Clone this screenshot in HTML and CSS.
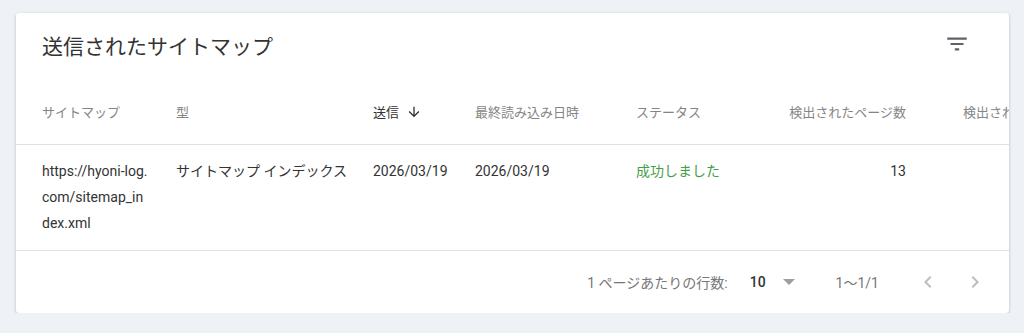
FILE: index.html
```html
<!DOCTYPE html>
<html lang="ja">
<head>
  <meta charset="UTF-8" />
  <title>送信されたサイトマップ</title>
  <link rel="stylesheet" href="styles.css">
</head>
<body>
  <div class="card">
    <div class="card-head">
      <h2>送信されたサイトマップ</h2>
      <span class="filter-btn">
        <svg width="26" height="26" viewBox="0 0 24 24"><path d="M10 18h4v-2h-4v2zM3 6v2h18V6H3zm3 7h12v-2H6v2z" fill="#5f6368"/></svg>
      </span>
    </div>

    <table class="sitemaps">
      <thead>
        <tr>
          <th class="c1">サイトマップ</th>
          <th class="c2">型</th>
          <th class="c3 sorted">送信 <svg class="sort" width="16" height="16" viewBox="0 0 24 24"><path d="M20 12l-1.41-1.41L13 16.17V4h-2v12.17l-5.58-5.59L4 12l8 8 8-8z" fill="#333"/></svg></th>
          <th class="c4">最終読み込み日時</th>
          <th class="c5">ステータス</th>
          <th class="c6 num">検出されたページ数</th>
          <th class="c7">検出された動画数</th>
        </tr>
      </thead>
      <tbody>
        <tr>
          <td class="url">https://hyoni-log.com/sitemap_index.xml</td>
          <td>サイトマップ インデックス</td>
          <td>2026/03/19</td>
          <td>2026/03/19</td>
          <td class="ok">成功しました</td>
          <td class="num">13</td>
          <td></td>
        </tr>
      </tbody>
    </table>

    <div class="pager">
      <span class="rows-label">1 ページあたりの行数:</span>
      <span class="rows-value">10</span>
      <span class="caret"></span>
      <span class="range">1〜1/1</span>
      <span class="nav-btn">
        <svg width="24" height="24" viewBox="0 0 24 24"><path d="M15.41 7.41L14 6l-6 6 6 6 1.41-1.41L10.83 12z" fill="#bdbdbd"/></svg>
      </span>
      <span class="nav-btn">
        <svg width="24" height="24" viewBox="0 0 24 24"><path d="M10 6L8.59 7.41 13.17 12l-4.58 4.59L10 18l6-6z" fill="#bdbdbd"/></svg>
      </span>
    </div>
  </div>
</body>
</html>
```

FILE: styles.css
```css
body {
  margin: 0;
  padding: 13px 15px 0 16px;
  background: #eef2f7;
  font-family: Roboto, "Noto Sans CJK JP", sans-serif;
  color: #333;
}
.card {
  background: #fff;
  border-radius: 3px;
  box-shadow: 0 1px 3px rgba(0, 0, 0, 0.25);
  overflow: hidden;
  width: 993px;
}
.card-head {
  display: flex;
  justify-content: space-between;
  align-items: flex-start;
  padding: 20px 39px 19px 26px;
}
.card-head h2 {
  margin: 0;
  font-size: 21px;
  font-weight: 400;
  line-height: 28px;
  color: #333;
}
.filter-btn {
  display: block;
  width: 26px;
  height: 26px;
  margin-top: -2px;
}
.filter-btn svg {
  display: block;
}
.sitemaps {
  border-collapse: collapse;
  table-layout: fixed;
  width: 1100px;
  font-size: 14px;
}
.sitemaps th,
.sitemaps td {
  box-sizing: border-box;
  padding: 0 24px 0 0;
  text-align: left;
  vertical-align: top;
  white-space: nowrap;
  overflow: hidden;
}
.sitemaps th {
  height: 64px;
  vertical-align: middle;
  font-size: 13px;
  font-weight: 400;
  color: #858585;
  border-bottom: 1px solid #e0e0e0;
}
.sitemaps th.sorted {
  color: #333;
}
.sort {
  vertical-align: -3px;
  margin-left: 4px;
}
.sitemaps td {
  line-height: 26px;
  padding-top: 13px;
  padding-bottom: 14px;
  border-bottom: 1px solid #e0e0e0;
}
.sitemaps th:first-child,
.sitemaps td:first-child {
  padding-left: 26px;
}
.sitemaps td.url {
  padding-right: 26px;
  white-space: normal;
  word-break: break-all;
}
.c1 { width: 160px; }
.c2 { width: 197px; }
.c3 { width: 102px; }
.c4 { width: 161px; }
.c5 { width: 130px; }
.c6 { width: 197px; }
.c7 { width: 153px; }
.sitemaps .num {
  text-align: right;
  padding-right: 57px;
}
.ok {
  color: #43a047;
}
.pager {
  display: flex;
  justify-content: flex-end;
  align-items: center;
  height: 62px;
  padding-right: 22px;
  font-size: 14px;
  color: #777;
}
.rows-value {
  margin-left: 22px;
  color: #333;
  font-weight: 500;
}
.caret {
  width: 0;
  height: 0;
  margin-left: 17px;
  border-left: 6px solid transparent;
  border-right: 6px solid transparent;
  border-top: 6px solid #9e9e9e;
}
.range {
  margin-left: 41px;
  margin-right: 37px;
}
.nav-btn {
  display: block;
  width: 24px;
  height: 24px;
}
.nav-btn + .nav-btn {
  margin-left: 23px;
}
.nav-btn svg {
  display: block;
}
```
